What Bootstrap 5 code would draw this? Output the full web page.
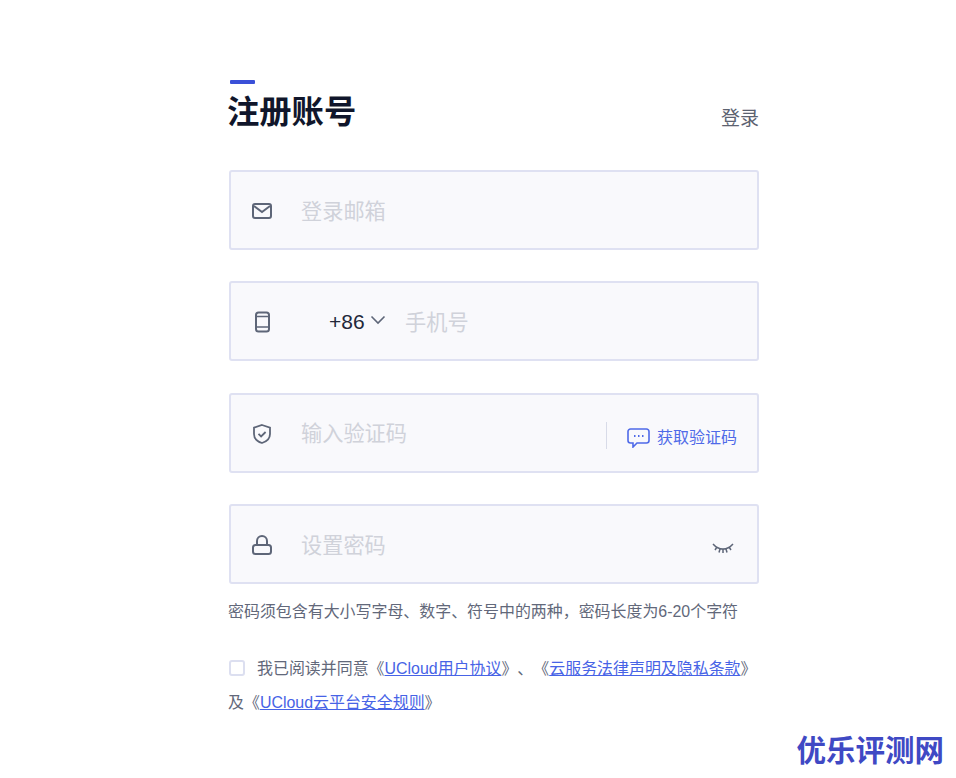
<!DOCTYPE html>
<html lang="zh-CN">
<head>
<meta charset="utf-8">
<title>注册账号</title>
<link href="https://cdn.jsdelivr.net/npm/bootstrap@5.3.0/dist/css/bootstrap.min.css" rel="stylesheet">
<style>
html,body{height:100%;}
body{font-family:"Liberation Sans","Noto Sans CJK SC",sans-serif;background:#fff;color:#5c6270;position:relative;height:778px;overflow:hidden;text-spacing-trim:space-all;}
.signup{width:530px;margin-left:229px;padding-top:80px;}
.accent{width:25px;height:4px;background:#3a50d8;margin-left:1px;border-radius:1px;}
.heading{font-size:32.3px;line-height:40px;font-weight:700;color:#10162b;margin:8px 0 0 -2px;}
.login-link{font-size:19px;line-height:24px;color:#5c6270;text-decoration:none;margin-top:23px;}
.head-row{height:86px;}
.field{height:80px;background:#f9f9fc;border:2px solid #dfe1f2;border-radius:3px;margin-bottom:31.3px;padding:0 22px 0 20px;}
.field:last-of-type{margin-bottom:0;}
.ficon{width:22px;height:22px;flex:none;margin-right:28px;margin-top:2px;color:#5e6678;}
.field .form-control{background:transparent;border:0;box-shadow:none;padding:0;font-size:21.2px;color:#333;border-radius:0;height:30px;margin-top:3px;}
.field .form-control::placeholder{color:#d0d2da;opacity:1;}
.code{font-size:21px;color:#23283a;width:41px;flex:none;margin-top:0;margin-left:1px;}
.chev{width:16px;height:10px;flex:none;margin:-2px 19px 0 0;color:#5e6678;}
.ficon.phone{margin-right:55px;}
.vline{width:1px;height:27px;background:#d8dbe8;flex:none;margin-right:20px;margin-top:6px;}
.send{color:#4f6ae8;font-size:16px;white-space:nowrap;text-decoration:none;gap:7px;margin-right:-2px;margin-top:11px;}
.send svg{margin-top:-1px;}
.eye{width:22px;height:12px;flex:none;color:#5e6678;margin-right:1px;margin-top:8px;}
.tip{font-size:15.95px;line-height:24px;color:#62687a;margin:16px 0 0 -1px;white-space:nowrap;}
.agree{font-size:15.95px;line-height:34px;color:#62687a;margin:28px 0 0 -1px;white-space:nowrap;}
.agree a{color:#4763e6;text-decoration:underline;}
.tick{width:16px;height:16px;border:2px solid #dcdff0;border-radius:3px;background:#fff;margin:0 12px 0 1px;vertical-align:-2px;display:inline-block;appearance:none;}
.mark-site{position:absolute;right:12px;bottom:9px;font-size:29.5px;line-height:36px;font-weight:700;color:#3f49c4;}
</style>
</head>
<body>
<main class="signup">
  <div class="accent"></div>
  <div class="d-flex justify-content-between align-items-start head-row">
    <h1 class="heading">注册账号</h1>
    <a href="#" class="login-link">登录</a>
  </div>

  <form>
    <div class="field d-flex align-items-center">
      <svg class="ficon" viewBox="0 0 22 22" fill="none" stroke="currentColor" stroke-width="2"><rect x="2" y="4" width="18" height="14" rx="2"/><path d="M3 6l8 6 8-6"/></svg>
      <input class="form-control" type="text" placeholder="登录邮箱">
    </div>
    <div class="field d-flex align-items-center">
      <svg class="ficon phone" viewBox="0 0 22 22" fill="none" stroke="currentColor" stroke-width="2"><rect x="5" y="1.5" width="13" height="19" rx="2.5"/><path d="M5 5.5h13M5 16h13" stroke-width="1.4"/></svg>
      <span class="code">+86</span>
      <svg class="chev" viewBox="0 0 16 10" fill="none" stroke="currentColor" stroke-width="1.6"><path d="M1.5 1.5L8 8l6.5-6.5"/></svg>
      <input class="form-control" type="tel" placeholder="手机号">
    </div>
    <div class="field d-flex align-items-center">
      <svg class="ficon" viewBox="0 0 22 22" fill="none" stroke="currentColor" stroke-width="1.8"><path d="M11 2l8 2.6v6.4c0 4.6-3.4 7.6-8 9-4.6-1.4-8-4.4-8-9V4.600z"/><path d="M7.500 10.800l2.600 2.600 4.500-4.400"/></svg>
      <input class="form-control" type="text" placeholder="输入验证码">
      <span class="vline"></span>
      <a href="#" class="send d-flex align-items-center">
        <svg width="23" height="20" viewBox="0 0 23 20" fill="none" stroke="currentColor" stroke-width="1.6"><path d="M3.500 1h16a2.500 2.500 0 0 1 2.500 2.500v9a2.500 2.500 0 0 1-2.500 2.500H10l-4 4v-4H3.500A2.500 2.500 0 0 1 1 12.500v-9A2.500 2.500 0 0 1 3.500 1z"/><path d="M7 8h1.500M11 8h1.500M15 8h1.500" stroke-width="2"/></svg>
        获取验证码
      </a>
    </div>
    <div class="field d-flex align-items-center">
      <svg class="ficon" viewBox="0 0 22 22" fill="none" stroke="currentColor" stroke-width="2"><rect x="2" y="11" width="18" height="9" rx="2.500"/><path d="M6 11V7a5 5 0 0 1 10 0v4"/></svg>
      <input class="form-control" type="password" placeholder="设置密码">
      <svg class="eye" viewBox="0 0 22 12" fill="none" stroke="currentColor" stroke-width="1.500"><path d="M1 2c3 3.400 6.500 5 10 5s7-1.600 10-5M5 5l-2 3M11 7v4M8 7l-1 3.500M14 7l1 3.500M17 5l2 3"/></svg>
    </div>
  </form>

  <p class="tip">密码须包含有大小写字母、数字、符号中的两种，密码长度为6-20个字符</p>
  <div class="agree">
    <input type="checkbox" class="tick" aria-label="同意">我已阅读并同意《<a href="#">UCloud用户协议</a>》、《<a href="#">云服务法律声明及隐私条款</a>》<br>及《<a href="#">UCloud云平台安全规则</a>》
  </div>
</main>
<div class="mark-site">优乐评测网</div>
<script src="https://cdn.jsdelivr.net/npm/bootstrap@5.3.0/dist/js/bootstrap.bundle.min.js"></script>
</body>
</html>
